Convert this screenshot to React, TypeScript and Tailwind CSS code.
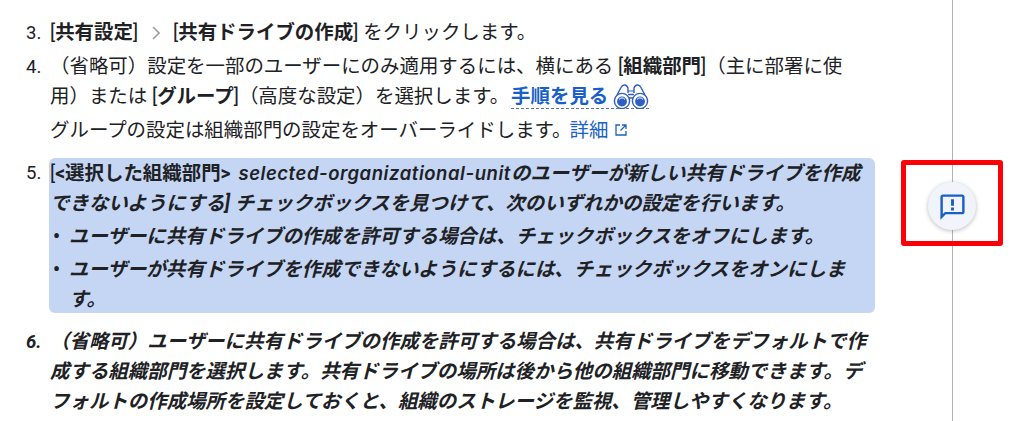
import React from 'react';

const Step: React.FC<{ num: string; className?: string; children: React.ReactNode }> = ({ num, className = '', children }) => (
  <div className={`flex ${className}`}>
    <span className="w-[24px] shrink-0 text-[18.5px]">{num}</span>
    <div className="min-w-0 flex-1">{children}</div>
  </div>
);

const Bullet: React.FC<{ children: React.ReactNode }> = ({ children }) => (
  <div className="flex">
    <span className="w-[19px] shrink-0 pl-[3px] not-italic">•</span>
    <div className="flex-1">{children}</div>
  </div>
);

const Binoculars = () => (
  <svg viewBox="0 0 36 25" className="inline-block h-[25px] w-[36px] align-[-6px]" fill="none" stroke="#2f5fc4" strokeWidth="1.4">
    <path d="M2.5 14 L8 3.5 Q9.5 0.8 11.5 1 Q14 1.2 15 4 V9 M15 10.5 h6 M15 14 h6 M21 9 V4 Q22 1.2 24.5 1 Q26.5 0.8 28 3.5 L33.5 14" />
    <path d="M15 7 H21" strokeWidth="1" />
    <circle cx="9" cy="17" r="7.6" fill="#fff" />
    <circle cx="9" cy="17.5" r="4.9" fill="#2f5fc4" stroke="none" />
    <path d="M6 15.5 a3.6 3.6 0 0 1 6 0" stroke="#fff" strokeWidth="1" />
    <circle cx="27" cy="17" r="7.6" fill="#fff" />
    <circle cx="27" cy="17.5" r="4.9" fill="#2f5fc4" stroke="none" />
    <path d="M24 15.5 a3.6 3.6 0 0 1 6 0" stroke="#fff" strokeWidth="1" />
  </svg>
);

export default function App() {
  return (
    <div className="relative flex h-[421px] w-[1016px] overflow-hidden bg-white font-['Roboto','Noto_Sans_CJK_JP',sans-serif] text-[19.45px] leading-[30px] text-[#202124]">
      <div className="h-full w-[953px] border-r border-[#b3b3b3] pl-[26px] pt-[18px]">
        <div className="w-[880px]">
          <Step num="3.">
            [<b>共有設定</b>]
            <svg viewBox="0 0 8 14" className="ml-[14px] mr-[13px] inline-block h-[14px] w-[8px] align-[-1px]" fill="none" stroke="#9aa0a6" strokeWidth="1.6">
              <path d="M1 1 L7 7 L1 13" />
            </svg>
            [<b>共有ドライブの作成</b>] をクリックします。
          </Step>
          <Step num="4." className="mt-[4px]">
            （省略可）設定を一部のユーザーにのみ適用するには、横にある [<b>組織部門</b>]（主に部署に使<br />
            用）または [<b>グループ</b>]（高度な設定）を選択します。
            <span className="ml-[2px] border-b border-dashed border-[#5f7299] font-bold text-[#1a5fc8]">
              手順を見る <Binoculars />
            </span>
            <div className="mt-[4px]">
              グループの設定は組織部門の設定をオーバーライドします。
              <span className="-ml-[2px] text-[#1a62c4]">詳細</span>
              <svg viewBox="0 0 12 12" className="ml-[7px] inline-block h-[12px] w-[12px] align-[1px]" fill="none" stroke="#1a62c4" strokeWidth="1.3">
                <path d="M5 1 H1 V11 H11 V7 M7 1 H11 V5 M11 1 L5.5 6.5" />
              </svg>
            </div>
          </Step>
          <Step num="5." className="mt-[12px]">
            <div className="-ml-[1px] h-[155px] w-[826px] rounded-[6px] bg-[#c5d6f5] pl-[1px] font-bold">
              <span className="font-normal">[</span>&lt;選択した組織部門&gt;{' '}
              <i>
                <span className="ml-[3px] font-['Inter'] text-[18.5px] font-semibold tracking-[0.55px]">selected-organizational-unit</span>
                のユーザーが新しい共有ドライブを作成
              </i>
              <br />
              <i>できないようにする] チェックボックスを見つけて、次のいずれかの設定を行います。</i>
              <div className="mt-[3px] italic">
                <Bullet>ユーザーに共有ドライブの作成を許可する場合は、チェックボックスをオフにします。</Bullet>
              </div>
              <div className="mt-[3px] italic">
                <Bullet>ユーザーが共有ドライブを作成できないようにするには、チェックボックスをオンにしま<br />す。</Bullet>
              </div>
            </div>
          </Step>
          <Step num="6." className="mt-[14px] font-bold italic">
            （省略可）ユーザーに共有ドライブの作成を許可する場合は、共有ドライブをデフォルトで作<br />
            成する組織部門を選択します。共有ドライブの場所は後から他の組織部門に移動できます。デ<br />
            フォルトの作成場所を設定しておくと、組織のストレージを監視、管理しやすくなります。
          </Step>
        </div>
      </div>

      <div className="absolute left-[901px] top-[160px] h-[86px] w-[102px] rounded-[3px] border-[5px] border-[#fb0007]" />
      <button className="absolute left-[928px] top-[182px] flex h-[48px] w-[48px] items-center justify-center rounded-full bg-[#f1f5fb] shadow-[0_1px_4px_rgba(60,64,67,0.35)]">
        <svg viewBox="0 0 24 24" className="h-[29px] w-[29px]" fill="#1a5fc8">
          <path d="M20 2H4c-1.1 0-2 .9-2 2v19l4.5-4.5H20c1.1 0 2-.9 2-2V4c0-1.1-.9-2-2-2zm0 14.5H5.7L4 18.2V4h16v12.5zM10.8 12.9h2.4v2.4h-2.4zm0-7h2.4v5.4h-2.4z" />
        </svg>
      </button>
    </div>
  );
}
